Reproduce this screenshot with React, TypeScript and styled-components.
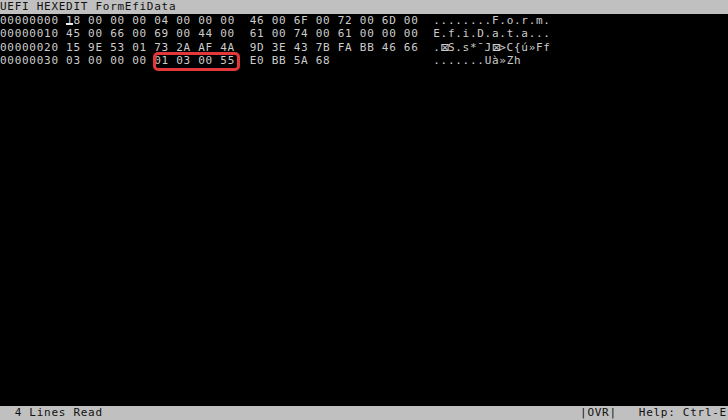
import React from "react";
import styled, { createGlobalStyle } from "styled-components";

const Global = createGlobalStyle`
  html, body { margin: 0; padding: 0; background: #000; }
  body { width: 728px; height: 420px; overflow: hidden; }
`;

const ROW = 13.55;
const CELL = 7.34;

const Screen = styled.div`
  display: flex;
  flex-direction: column;
  width: 728px;
  height: 420px;
  background: #000;
  font-family: "DejaVu Sans Mono", "Liberation Mono", monospace;
  font-size: 11px;
  letter-spacing: 0.72px;
  line-height: ${ROW}px;
  white-space: pre;
  overflow: hidden;
`;

const Bar = styled.div`
  height: ${ROW}px;
  flex: 0 0 ${ROW}px;
  background: #c0c0c0;
  color: #111;
`;

const Body = styled.div`
  flex: 1;
  color: #cccccc;
`;

const Line = styled.div`
  height: ${ROW}px;
`;

const Cursor = styled.span`
  position: relative;
  &::after {
    content: "";
    position: absolute;
    left: 0;
    right: 0.6px;
    bottom: 1.1px;
    height: 2.6px;
    background: #f0f0f0;
  }
`;

const Tofu = styled.span`
  display: inline-block;
  width: ${CELL}px;
  letter-spacing: 0;
  text-align: center;
  font-size: 14px;
  line-height: 0;
  vertical-align: -1px;
`;

const Highlight = styled.span`
  position: relative;
  &::after {
    content: "";
    position: absolute;
    top: -2px;
    bottom: -4px;
    left: -1.6px;
    right: -5px;
    border: 3px solid #e4373a;
    border-radius: 5px;
  }
`;

type Row = { addr: string; bytes: string[] };

const rows: Row[] = [
  { addr: "00000000", bytes: "18 00 00 00 04 00 00 00 46 00 6F 00 72 00 6D 00".split(" ") },
  { addr: "00000010", bytes: "45 00 66 00 69 00 44 00 61 00 74 00 61 00 00 00".split(" ") },
  { addr: "00000020", bytes: "15 9E 53 01 73 2A AF 4A 9D 3E 43 7B FA BB 46 66".split(" ") },
  { addr: "00000030", bytes: "03 00 00 00 01 03 00 55 E0 BB 5A 68".split(" ") },
];

const hexPart = (bytes: string[], from: number) => {
  const out: string[] = [];
  for (let i = from; i < from + 8; i++) out.push(bytes[i] ?? "  ");
  return out.join(" ");
};

const T = () => <Tofu>{"\u22A0"}</Tofu>;

export default function App() {
  return (
    <>
      <Global />
      <Screen>
        <Bar>UEFI HEXEDIT FormEfiData</Bar>
        <Body>
          <Line>
            {rows[0].addr + " "}
            <Cursor>1</Cursor>
            {hexPart(rows[0].bytes, 0).slice(1) + "  " + hexPart(rows[0].bytes, 8) + "  ........F.o.r.m."}
          </Line>
          <Line>{rows[1].addr + " " + hexPart(rows[1].bytes, 0) + "  " + hexPart(rows[1].bytes, 8) + "  E.f.i.D.a.t.a..."}</Line>
          <Line>
            {rows[2].addr + " " + hexPart(rows[2].bytes, 0) + "  " + hexPart(rows[2].bytes, 8) + "  ."}
            <T />
            {"S.s*\u00AFJ"}
            <T />
            {">C{\u00FA\u00BBFf"}
          </Line>
          <Line>
            {rows[3].addr + " 03 00 00 00 "}
            <Highlight>01 03 00 55</Highlight>
            {"  " + hexPart(rows[3].bytes, 8) + "  .......U\u00E0\u00BBZh"}
          </Line>
        </Body>
        <Bar>{"  4 Lines Read" + " ".repeat(65) + "|OVR|   Help: Ctrl-E"}</Bar>
      </Screen>
    </>
  );
}
